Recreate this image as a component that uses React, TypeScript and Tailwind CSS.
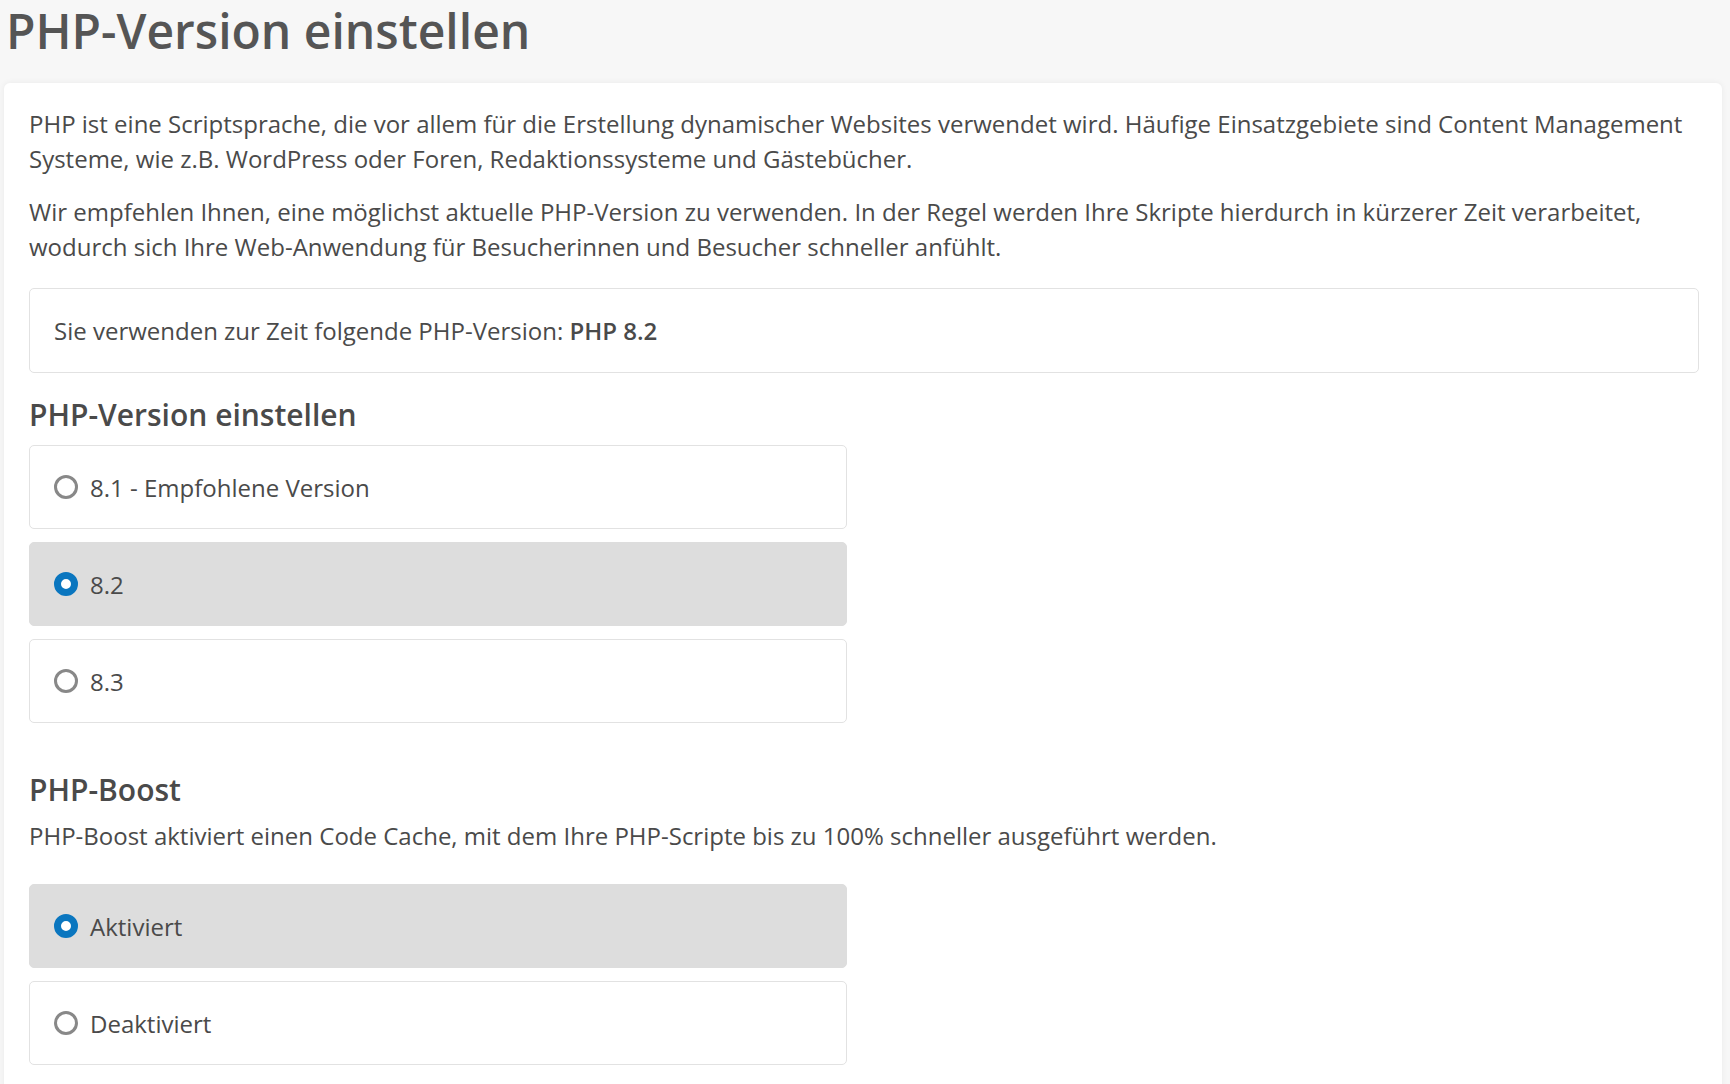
import { useState } from 'react';

type Option = { value: string; label: string };

const phpVersions: Option[] = [
  { value: '8.1', label: '8.1 - Empfohlene Version' },
  { value: '8.2', label: '8.2' },
  { value: '8.3', label: '8.3' },
];

const boostOptions: Option[] = [
  { value: 'on', label: 'Aktiviert' },
  { value: 'off', label: 'Deaktiviert' },
];

function RadioList({
  name,
  options,
  value,
  onChange,
}: {
  name: string;
  options: Option[];
  value: string;
  onChange: (v: string) => void;
}) {
  return (
    <div className="flex flex-col gap-[13px] w-[818px]">
      {options.map((opt) => {
        const checked = opt.value === value;
        return (
          <label
            key={opt.value}
            className={`flex items-center gap-[12px] h-[84px] pl-[24px] pr-[23px] rounded-[5px] border cursor-pointer ${
              checked ? 'bg-[#dddddd] border-[#dddddd]' : 'bg-white border-[#e2e2e2]'
            }`}
          >
            <input
              type="radio"
              name={name}
              checked={checked}
              onChange={() => onChange(opt.value)}
              className="sr-only"
            />
            {checked ? (
              <span className="w-[24px] h-[24px] rounded-full border-[7px] border-[#0a76bf] bg-white shrink-0" />
            ) : (
              <span className="w-[24px] h-[24px] rounded-full border-[3px] border-[#888888] bg-white shrink-0" />
            )}
            <span className="text-[24px] leading-[35px]">{opt.label}</span>
          </label>
        );
      })}
    </div>
  );
}

export default function App() {
  const [version, setVersion] = useState('8.2');
  const [boost, setBoost] = useState('on');

  return (
    <div
      className="min-h-screen bg-[#f7f7f7] text-[#4a4a4a] pb-10"
      style={{ fontFamily: '"Open Sans", "Noto Sans", sans-serif' }}
    >
      {/* Page title */}
      <h1 className="text-[48px] leading-[62px] font-semibold text-[#555555] pl-[6px] pb-[21px]">
        PHP-Version einstellen
      </h1>

      {/* Card */}
      <div className="ml-[4px] mr-[8px] bg-white rounded-[6px] shadow-[0_0_6px_rgba(0,0,0,0.06)] pl-[25px] pr-[23px] pt-[23px] pb-[40px]">
        <p className="text-[24px] leading-[35px] mb-[18px]">
          PHP ist eine Scriptsprache, die vor allem für die Erstellung dynamischer Websites verwendet wird. Häufige
          Einsatzgebiete sind Content Management Systeme, wie z.B. WordPress oder Foren, Redaktionssysteme und
          Gästebücher.
        </p>
        <p className="text-[24px] leading-[35px]">
          Wir empfehlen Ihnen, eine möglichst aktuelle PHP-Version zu verwenden. In der Regel werden Ihre Skripte
          hierdurch in kürzerer Zeit verarbeitet, wodurch sich Ihre Web-Anwendung für Besucherinnen und Besucher
          schneller anfühlt.
        </p>

        <div className="mt-[24px] border border-[#e2e2e2] rounded-[5px] px-[24px] py-[24px] text-[24px] leading-[35px]">
          Sie verwenden zur Zeit folgende PHP-Version: <span className="font-semibold">PHP 8.2</span>
        </div>

        <h2 className="mt-[25px] mb-[13px] text-[30px] leading-[34px] font-semibold text-[#4a4a4a]">
          PHP-Version einstellen
        </h2>
        <RadioList name="php" options={phpVersions} value={version} onChange={setVersion} />

        <h2 className="mt-[50px] mb-[11px] text-[30px] leading-[34px] font-semibold text-[#4a4a4a]">PHP-Boost</h2>
        <p className="text-[24px] leading-[35px] mb-[31px]">
          PHP-Boost aktiviert einen Code Cache, mit dem Ihre PHP-Scripte bis zu 100% schneller ausgeführt werden.
        </p>
        <RadioList name="boost" options={boostOptions} value={boost} onChange={setBoost} />
      </div>
    </div>
  );
}
